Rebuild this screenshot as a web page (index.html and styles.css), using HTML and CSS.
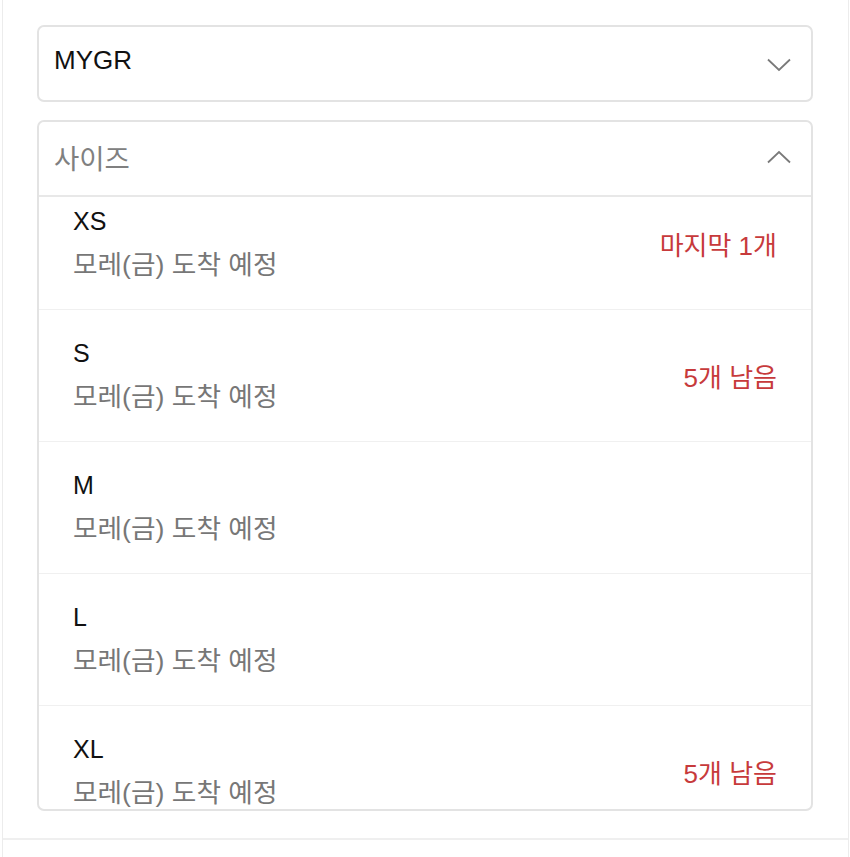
FILE: index.html
```html
<!DOCTYPE html>
<html lang="ko">
<head>
    <meta charset="UTF-8">
    <meta name="viewport" content="width=device-width, initial-scale=1.0">
    <title>옵션 선택</title>
    <link rel="stylesheet" href="styles.css">
</head>
<body>
    <div id="wrap">
        <div class="options">
            <div class="select">
                <div class="selectHead">
                    <span class="value">MYGR</span>
                    <svg class="arrow" width="24" height="14" viewBox="0 0 24 14"><path d="M1 1.5 L12 12 L23 1.5" fill="none" stroke="#7a7a7a" stroke-width="1.8"/></svg>
                </div>
            </div>
            <div class="select open">
                <div class="selectHead">
                    <span class="placeholder">사이즈</span>
                    <svg class="arrow" width="24" height="14" viewBox="0 0 24 14"><path d="M1 12.5 L12 2 L23 12.5" fill="none" stroke="#7a7a7a" stroke-width="1.8"/></svg>
                </div>
                <div class="list">
                    <ul class="items">
                        <li class="item">
                            <div class="info"><p class="name">XS</p><p class="desc">모레(금) 도착 예정</p></div>
                            <span class="stock">마지막 1개</span>
                        </li>
                        <li class="item">
                            <div class="info"><p class="name">S</p><p class="desc">모레(금) 도착 예정</p></div>
                            <span class="stock">5개 남음</span>
                        </li>
                        <li class="item">
                            <div class="info"><p class="name">M</p><p class="desc">모레(금) 도착 예정</p></div>
                        </li>
                        <li class="item">
                            <div class="info"><p class="name">L</p><p class="desc">모레(금) 도착 예정</p></div>
                        </li>
                        <li class="item">
                            <div class="info"><p class="name">XL</p><p class="desc">모레(금) 도착 예정</p></div>
                            <span class="stock">5개 남음</span>
                        </li>
                    </ul>
                </div>
            </div>
        </div>
        <div class="next"></div>
    </div>
</body>
</html>
```

FILE: styles.css
```css
* {
    margin: 0;
    padding: 0;
    box-sizing: border-box;
}
body {
    width: 100%;
    height: 100vh;
    background: #fff;
    font-family: "Liberation Sans", "Noto Sans CJK KR", sans-serif;
    color: #111;
    overflow: hidden;
}

#wrap {
    margin-left: 2px;
    width: 847px;
    border-left: 1px solid #ececec;
    border-right: 1px solid #ececec;
}

.options {
    padding: 25px 35px 27px 34px;
    border-bottom: 2px solid #efefef;
}

.select {
    border: 2px solid #e3e3e3;
    border-radius: 7px;
    overflow: hidden;
}
.select + .select {
    margin-top: 18px;
}

.selectHead {
    height: 73px;
    display: flex;
    align-items: center;
    justify-content: space-between;
    padding: 0 20px 0 15px;
    font-size: 26px;
}
.select.open .selectHead {
    height: 75px;
    border-bottom: 2px solid #e8e8e8;
}
.selectHead .value {
    margin-top: -6px;
}
.selectHead .arrow {
    margin-top: 2px;
}
.select.open .selectHead .arrow {
    margin-top: -4px;
}
.placeholder {
    color: #808080;
    font-size: 27.5px;
    margin-top: -3px;
}

.list {
    height: 612px;
    overflow: hidden;
}

.items {
    list-style: none;
    margin-top: -19px;
}

.item {
    height: 132px;
    border-bottom: 1px solid #f0f0f0;
    display: flex;
    align-items: center;
    justify-content: space-between;
    padding: 0 34px 0 34px;
}

.info {
    display: flex;
    flex-direction: column;
    gap: 20px;
    margin-top: -2px;
}
.name {
    font-size: 25px;
    line-height: 24px;
    color: #111;
}
.desc {
    font-size: 26.7px;
    line-height: 24px;
    color: #777;
}

.stock {
    font-size: 26px;
    color: #c73a3b;
}

.next {
    height: 20px;
}
```
